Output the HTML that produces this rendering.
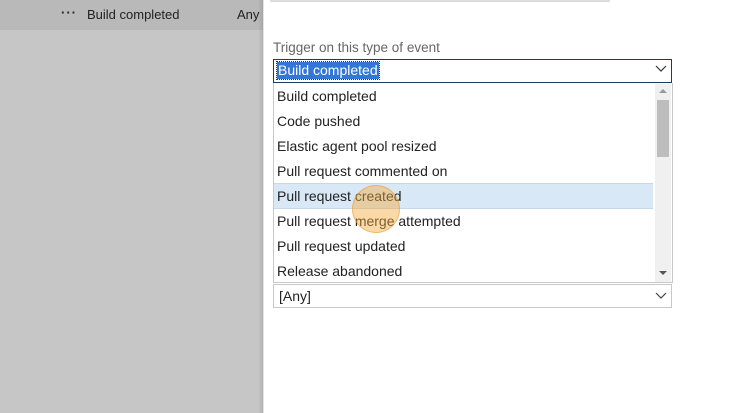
<!DOCTYPE html>
<html><head><style>
body{margin:0;width:745px;height:413px;overflow:hidden;background:#fff;font-family:"Segoe UI","Liberation Sans",sans-serif;position:relative}
.left{position:absolute;left:0;top:0;width:263px;height:413px;background:#c6c6c6}
.top{position:absolute;left:0;top:0;width:263px;height:30px;background:#b9b9b9;font-size:13px;color:#222}
.shadow{position:absolute;left:258px;top:0;width:6px;height:413px;background:linear-gradient(to right,rgba(0,0,0,0),rgba(0,0,0,.12))}
.t{position:absolute;font-size:14px;color:#222;white-space:nowrap}
.sel{position:absolute;left:273px;width:397px;height:22px;background:#fff}
.item{position:absolute;left:277px;font-size:14px;color:#222}
</style></head><body>
<div class="left"></div>
<div class="top">
<span style="position:absolute;left:61px;top:5px;font-weight:bold;letter-spacing:1px">···</span>
<span style="position:absolute;left:87px;top:7px">Build completed</span>
<span style="position:absolute;left:237px;top:7px">Any</span>
</div>
<div class="shadow"></div>
<div style="position:absolute;left:270px;top:-1px;width:340px;height:3px;background:#ddd"></div>
<div class="t" style="left:273px;top:40px;color:#666;font-size:13.5px">Trigger on this type of event</div>
<div class="sel" style="top:59px;border:1px solid #1f3a5c;"></div>
<span style="position:absolute;left:277px;top:62px;background:#3276d6;color:#fff;font-size:14px;line-height:17px;padding:0 1px;outline:1px dotted #333">Build completed</span>
<svg style="position:absolute;left:655px;top:65px" width="12" height="8"><path d="M1 1 L6 6 L11 1" stroke="#333" fill="none" stroke-width="1.2"/></svg>
<div style="position:absolute;left:273px;top:83px;width:398px;height:199px;border:1px solid #c8c8c8;border-top:none;background:#fff"></div>
<div style="position:absolute;left:655px;top:84px;width:16px;height:198px;background:#f0f0f0"></div>
<div style="position:absolute;left:657px;top:100px;width:12px;height:57px;background:#bdbdbd"></div>
<svg style="position:absolute;left:658px;top:88px" width="10" height="6"><path d="M1 5 L5 1 L9 5Z" fill="#999"/></svg>
<svg style="position:absolute;left:658px;top:270px" width="10" height="6"><path d="M1 1 L5 5 L9 1Z" fill="#555"/></svg>
<div style="position:absolute;left:274px;top:183px;width:379px;height:24px;background:#d9e8f6;border-top:1px solid #c5d9ee;border-bottom:1px solid #c5d9ee"></div>
<div class="item" style="top:88px">Build completed</div>
<div class="item" style="top:113px">Code pushed</div>
<div class="item" style="top:138px">Elastic agent pool resized</div>
<div class="item" style="top:163px">Pull request commented on</div>
<div class="item" style="top:188px">Pull request created</div>
<div class="item" style="top:213px">Pull request merge attempted</div>
<div class="item" style="top:238px">Pull request updated</div>
<div class="item" style="top:263px">Release abandoned</div>
<div style="position:absolute;left:352px;top:185px;width:46px;height:46px;border-radius:50%;background:rgba(245,170,60,.45);border:1px solid rgba(230,150,40,.5)"></div>
<div class="sel" style="top:284px;border:1px solid #c8c8c8;"></div>
<div class="item" style="top:288px;left:279px">[Any]</div>
<svg style="position:absolute;left:655px;top:292px" width="12" height="8"><path d="M1 1 L6 6 L11 1" stroke="#444" fill="none" stroke-width="1.2"/></svg>
</body></html>
